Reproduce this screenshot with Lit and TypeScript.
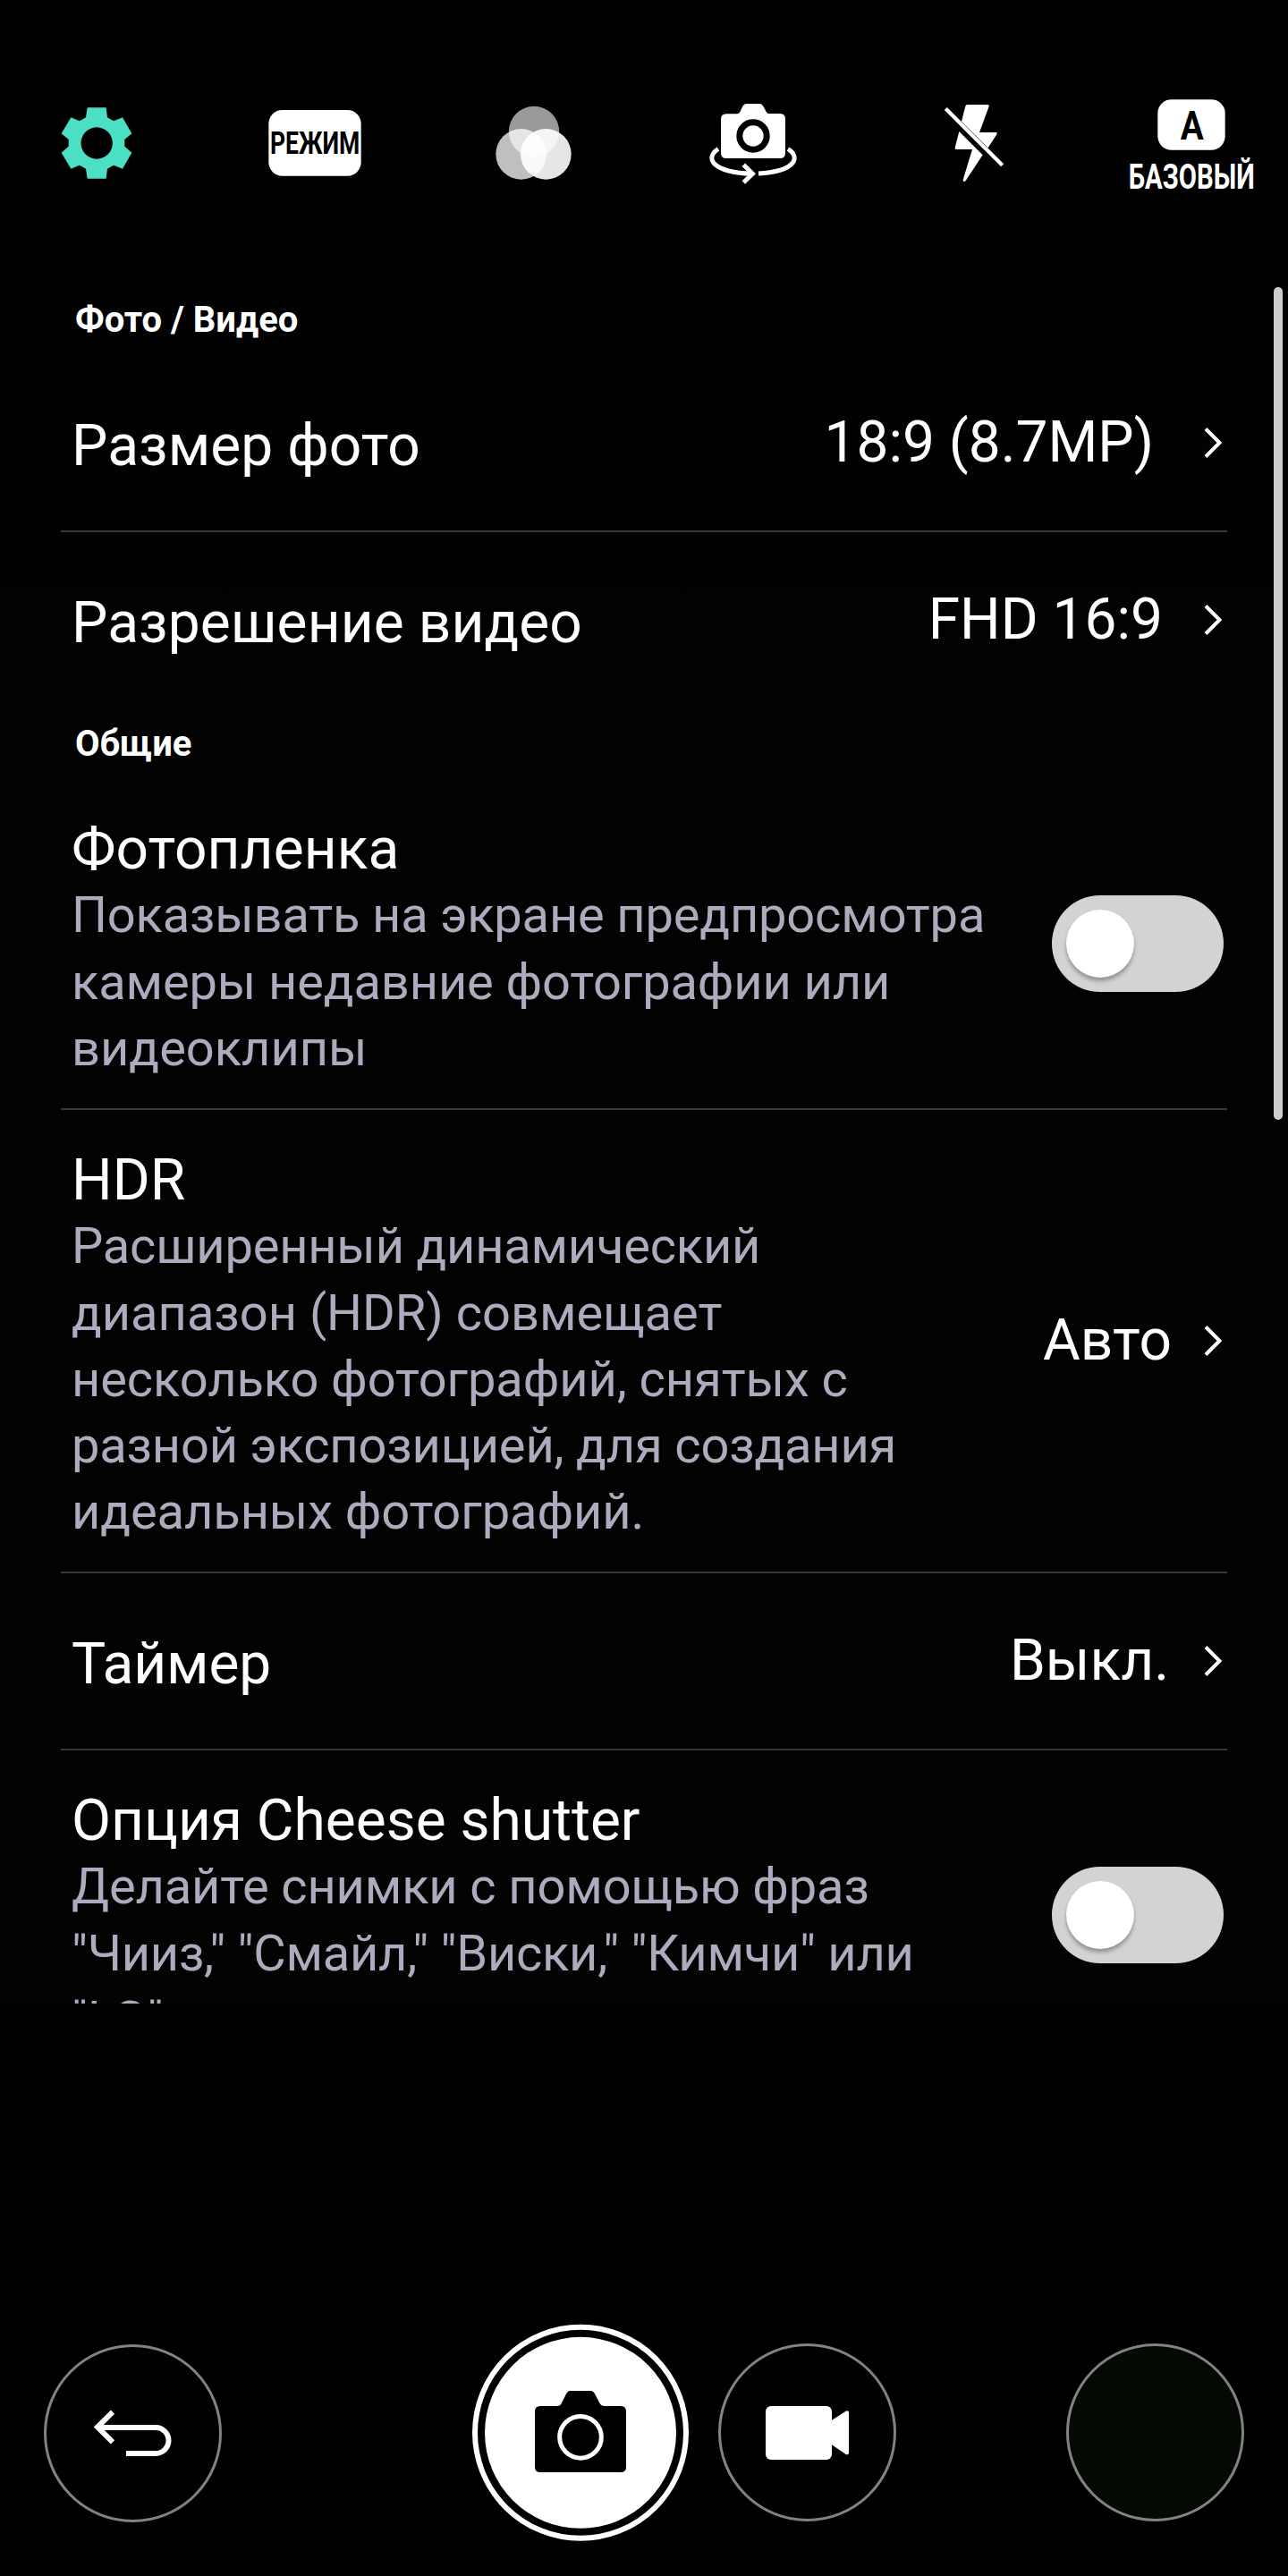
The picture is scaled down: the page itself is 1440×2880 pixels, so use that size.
import { LitElement, html, svg, css, nothing } from "lit";
import { customElement, property } from "lit/decorators.js";

interface Line {
  text: string;
  /** Letter spacing of the line, in pixels. */
  track: number;
}

interface Setting {
  title: string;
  track?: number;
  lines?: Line[];
  value?: string;
  /** Space between the value and the chevron, in pixels. */
  gap?: number;
  toggle?: boolean;
  divider?: boolean;
}

interface Section {
  name: string;
  items: Setting[];
}

const SECTIONS: Section[] = [
  {
    name: "Фото / Видео",
    items: [
      { title: "Размер фото", track: 0.1, value: "18:9 (8.7MP)", gap: 55, divider: true },
      { title: "Разрешение видео", track: 0.1, value: "FHD 16:9", gap: 45 },
    ],
  },
  {
    name: "Общие",
    items: [
      {
        title: "Фотопленка",
        track: 0.1,
        lines: [
          { text: "Показывать на экране предпросмотра", track: -0.16 },
          { text: "камеры недавние фотографии или", track: -0.11 },
          { text: "видеоклипы", track: 0 },
        ],
        toggle: true,
        divider: true,
      },
      {
        title: "HDR",
        lines: [
          { text: "Расширенный динамический", track: -0.2 },
          { text: "диапазон (HDR) совмещает", track: 0 },
          { text: "несколько фотографий, снятых с", track: -0.07 },
          { text: "разной экспозицией, для создания", track: -0.17 },
          { text: "идеальных фотографий.", track: -0.07 },
        ],
        value: "Авто",
        gap: 35,
        divider: true,
      },
      { title: "Таймер", track: -0.1, value: "Выкл.", gap: 38, divider: true },
      {
        title: "Опция Cheese shutter",
        lines: [
          { text: "Делайте снимки с помощью фраз", track: -0.13 },
          { text: '"Чииз," "Смайл," "Виски," "Кимчи" или', track: -0.25 },
          { text: '"LG".', track: 0 },
        ],
        toggle: true,
      },
    ],
  },
];

@customElement("toggle-switch")
class ToggleSwitch extends LitElement {
  static styles = css`
    :host {
      display: flex;
      box-sizing: border-box;
      width: 192px;
      height: 108px;
      padding: 16px;
      border-radius: 54px;
      background: #d3d3d3;
    }
    .knob {
      width: 76px;
      height: 76px;
      border-radius: 50%;
      background: #fff;
      box-shadow: 0 4px 4px rgba(0, 0, 0, 0.3);
    }
  `;
  render() {
    return html`<div class="knob"></div>`;
  }
}

@customElement("setting-row")
class SettingRow extends LitElement {
  @property({ attribute: false }) item!: Setting;

  static styles = css`
    :host {
      display: block;
      color: #fff;
      font-size: 64px;
      line-height: 75px;
      white-space: nowrap;
    }
    .row {
      display: flex;
      align-items: center;
      justify-content: space-between;
      min-height: 196px;
      padding: 0 72px 0 80px;
    }
    .divider {
      height: 2px;
      margin: 0 68px;
      background: #373737;
    }
    .simple {
      padding-top: 6px;
    }
    .detailed {
      padding: 41px 0 30px;
    }
    .desc {
      margin-top: -1px;
      color: #aeabbe;
      font-size: 56px;
      line-height: 74px;
    }
    .line:first-child {
      margin-bottom: 1px;
    }
    .end {
      display: flex;
      align-items: center;
    }
    .value {
      padding-bottom: 2px;
    }
    .chevron {
      display: block;
      width: 22px;
      height: 38px;
      margin-right: 1px;
    }
  `;

  render() {
    const { title, track = 0, lines, value, gap, toggle, divider } = this.item;
    return html`
      <div class="row">
        <div class=${lines ? "detailed" : "simple"}>
          <div style="letter-spacing:${track}px">${title}</div>
          ${lines
            ? html`<div class="desc">
                ${lines.map((l) => html`<div class="line" style="letter-spacing:${l.track}px">${l.text}</div>`)}
              </div>`
            : nothing}
        </div>
        ${toggle ? html`<toggle-switch></toggle-switch>` : nothing}
        ${value
          ? html`<div class="end">
              <div class="value" style="margin-right:${gap}px">${value}</div>
              <svg class="chevron" viewBox="0 0 22 38">
                <path d="M3 3.5 18.5 19 3 34.5" fill="none" stroke="#fff" stroke-width="4" />
              </svg>
            </div>`
          : nothing}
      </div>
      ${divider ? html`<div class="divider"></div>` : nothing}
    `;
  }
}

const GEAR = svg`
  <path fill="#4bdfc3" fill-rule="evenodd" d="M173 91H236L240 124 261 136 291 124 322 178 298 198V221L322 242 291 296 261 284 240 296 236 329H173L168 296 147 284 118 296 86 242 110 221V198L86 178 118 124 147 136 168 124ZM204.500 157a53 53 0 1 0 .1 0Z"/>`;

const FILTERS = svg`
  <g fill="#fff">
    <circle cx="231" cy="171" r="84.500" opacity=".6"/>
    <circle cx="188" cy="247" r="85" opacity=".75"/>
    <circle cx="271" cy="247" r="85" opacity=".9"/>
  </g>`;

const FLIP = svg`
  <path fill="#fff" d="M876 112H912Q919 112 922 105L931 86Q935 78 943 78H988Q996 78 1000 86L1010 105Q1013 111 1019 111H1056Q1074 111 1074 129V243Q1074 261 1056 261H876Q858 261 858 243V130Q858 112 876 112Z"/>
  <circle cx="966" cy="186" r="45.500" fill="#fff" stroke="#000" stroke-width="21"/>
  <g fill="none" stroke="#fff">
    <path stroke-width="15" d="M849 230C826 244 820 264 838 281C860 301 905 311 962 313"/>
    <path stroke-width="15" d="M1083 230C1106 244 1112 264 1094 281C1073 301 1035 309 984 312"/>
    <path stroke-width="15" d="M934 283 964 313 934 342"/>
  </g>`;

const FLASH = svg`
  <path fill="#fff" d="M364 81H433Q439 81 437 87L405 174H460Q466 175 463 181L434 226 345 137 358 86Q359 81 364 81Z"/>
  <path fill="#fff" d="M337 171 416 250 359 336Q356 340 352 338 349 337 350 333L381 231H327Q322 231 323 226Z"/>
  <path stroke="#fff" stroke-width="13" d="M292 94.500 482 284.500"/>`;

const BASIC = svg`
  <rect x="1003" y="64" width="226" height="169" rx="46" fill="#fff"/>
  <text x="1079" y="197" font-size="133" font-weight="700" textLength="78" lengthAdjust="spacingAndGlyphs" fill="#000">A</text>
  <text x="905" y="363" font-size="118" font-weight="700" textLength="423" lengthAdjust="spacingAndGlyphs" fill="#fff">БАЗОВЫЙ</text>`;

const MODE = svg`
  <rect x="781" y="99" width="310" height="221" rx="46" fill="#fff"/>
  <text x="786" y="246" font-size="106" font-weight="700" textLength="301" lengthAdjust="spacingAndGlyphs" fill="#000">РЕЖИМ</text>`;

const BACK = svg`
  <g fill="none" stroke="#fff" stroke-width="18">
    <path d="M270 432H462A43.500 43.500 0 0 1 462 519H363"/>
    <path d="M318 380 267 430.500 318 481"/>
  </g>`;

const SHUTTER = svg`
  <circle cx="447" cy="449.500" r="354" fill="none" stroke="#fff" stroke-width="18"/>
  <circle cx="447" cy="449.500" r="321" fill="#fff"/>
  <path d="M312 360H368Q378 360 382 353L400 317Q404 309 412 309H482Q490 309 494 317L512 352Q516 360 525 360H582Q600 360 600 378V564Q600 582 582 582H312Q294 582 294 564V378Q294 360 312 360Z"/>
  <circle cx="447" cy="464.500" r="70" fill="none" stroke="#fff" stroke-width="15"/>`;

const VIDEO = svg`
  <rect x="1068" y="360" width="222" height="180" rx="18" fill="#fff"/>
  <path fill="#fff" d="M1289 408 1337 377Q1347 373 1347 382V517Q1347 525 1337 522L1289 489Z"/>`;

@customElement("app-root")
class AppRoot extends LitElement {
  static styles = css`
    :host {
      display: flex;
      flex-direction: column;
      width: 1440px;
      height: 2880px;
      overflow: hidden;
      background: #000;
      color: #fff;
      font-family: Roboto, "Noto Sans", sans-serif;
    }
    svg {
      display: block;
      flex: none;
      overflow: visible;
    }
    .toolbar {
      display: flex;
      align-items: center;
      flex: none;
      height: 320px;
      padding-left: 68px;
    }
    .gear { width: 80px; height: 80px; }
    .mode { width: 104px; height: 74px; margin-left: 152px; }
    .filters { width: 86px; height: 84px; margin-left: 150px; }
    .flip { width: 100px; height: 90px; margin-left: 152px; }
    .flash { width: 68px; height: 88px; margin-left: 163px; }
    .basic { width: 140px; height: 100px; margin-left: 139px; }
    .list {
      position: relative;
      flex: none;
      box-sizing: border-box;
      height: 1920px;
      padding-top: 1px;
      overflow: hidden;
      background: linear-gradient(#010101, #020202 30%, #030303);
    }
    .section + .section {
      margin-top: 4px;
    }
    .heading {
      height: 76px;
      margin: 0;
      padding-left: 84px;
      font-size: 40px;
      font-weight: 700;
      line-height: 74px;
    }
    .scrollbar {
      position: absolute;
      top: 1px;
      right: 6px;
      width: 10px;
      height: 931px;
      border-radius: 5px;
      background: #cdcdcd;
    }
    .controls {
      display: flex;
      align-items: flex-start;
      padding: 359px 0 0 49px;
    }
    .round {
      display: flex;
      box-sizing: border-box;
      width: 199px;
      height: 199px;
      margin-top: 21px;
      border: 3px solid #828282;
      border-radius: 50%;
      background: #010100;
    }
    .round svg {
      width: 193px;
      height: 193px;
    }
    .back { margin-top: 22px; }
    .shutter { width: 242px; height: 242px; margin-left: 280px; }
    .video { margin-left: 33px; }
    .gallery { margin-left: 190px; background: #040904; }
  `;

  render() {
    return html`
      <header class="toolbar">
        <svg class="gear" viewBox="84 90 240 240">${GEAR}</svg>
        <svg class="mode" viewBox="780 99 312 222">${MODE}</svg>
        <svg class="filters" viewBox="102 84 258 252">${FILTERS}</svg>
        <svg class="flip" viewBox="816 75 300 270">${FLIP}</svg>
        <svg class="flash" viewBox="285 78 204 264">${FLASH}</svg>
        <svg class="basic" viewBox="906 60 420 300">${BASIC}</svg>
      </header>
      <main class="list">
        ${SECTIONS.map(
          (s) => html`<section class="section">
            <h2 class="heading">${s.name}</h2>
            ${s.items.map((i) => html`<setting-row .item=${i}></setting-row>`)}
          </section>`
        )}
        <div class="scrollbar"></div>
      </main>
      <footer class="controls">
        <div class="round back"><svg viewBox="96 162 579 579">${BACK}</svg></div>
        <svg class="shutter" viewBox="84 87 726 726">${SHUTTER}</svg>
        <div class="round video"><svg viewBox="918 159 579 579">${VIDEO}</svg></div>
        <div class="round gallery"></div>
      </footer>
    `;
  }
}
